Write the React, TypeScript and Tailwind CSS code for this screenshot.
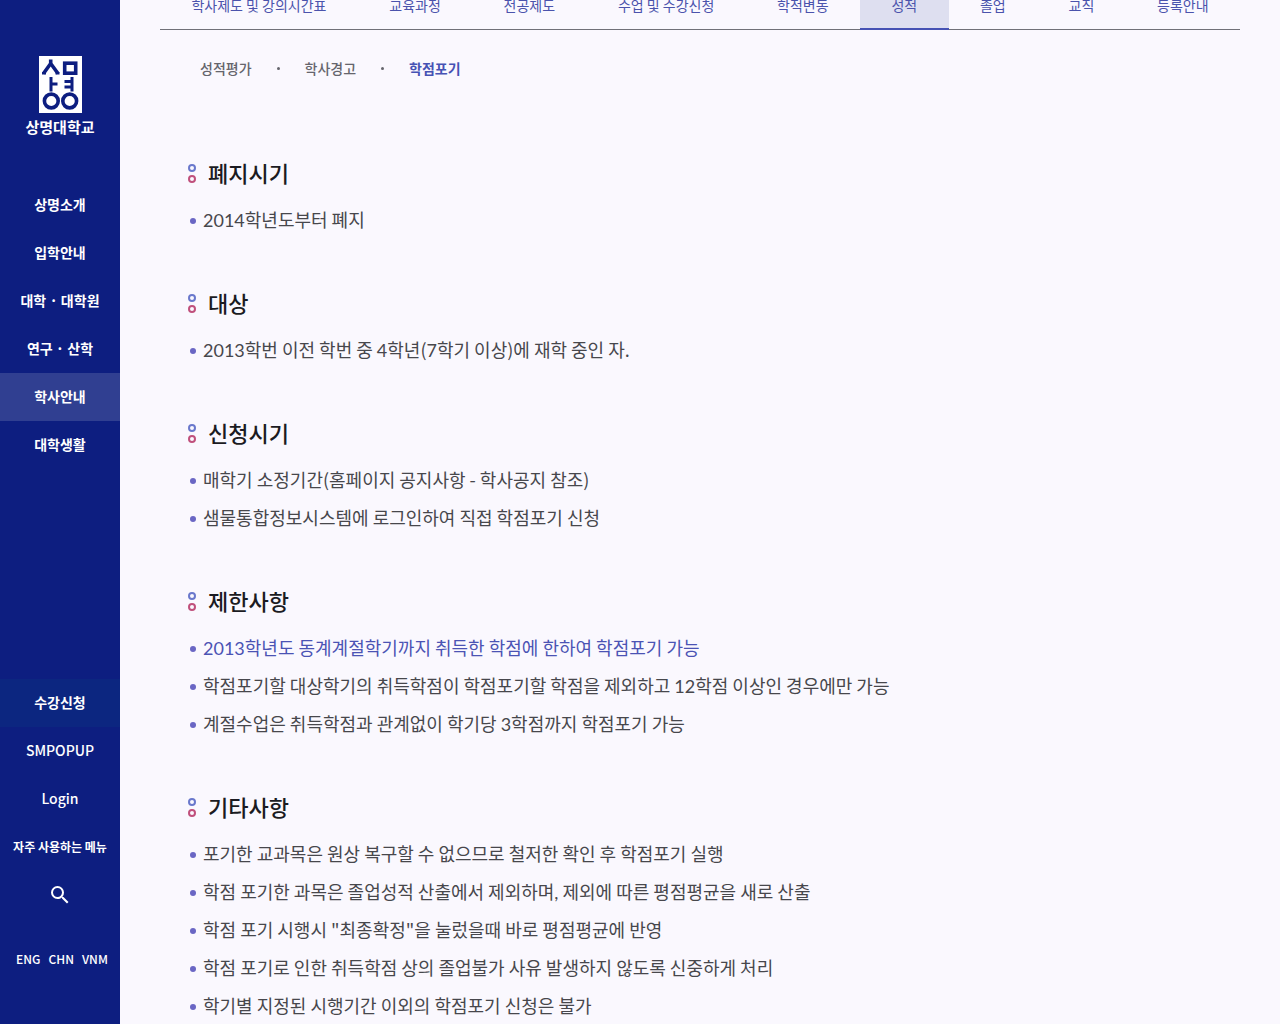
import React from 'react';
import { MdSearch } from 'react-icons/md';

const mainMenu = ['상명소개', '입학안내', '대학 · 대학원', '연구 · 산학', '학사안내', '대학생활'];

const tabs = ['학사제도 및 강의시간표', '교육과정', '전공제도', '수업 및 수강신청', '학적변동', '성적', '졸업', '교직', '등록안내'];

const subTabs = ['성적평가', '학사경고', '학점포기'];

const sections: { title: string; items: { text: string; point?: boolean }[] }[] = [
  { title: '폐지시기', items: [{ text: '2014학년도부터 폐지' }] },
  { title: '대상', items: [{ text: '2013학번 이전 학번 중 4학년(7학기 이상)에 재학 중인 자.' }] },
  {
    title: '신청시기',
    items: [
      { text: '매학기 소정기간(홈페이지 공지사항 - 학사공지 참조)' },
      { text: '샘물통합정보시스템에 로그인하여 직접 학점포기 신청' },
    ],
  },
  {
    title: '제한사항',
    items: [
      { text: '2013학년도 동계계절학기까지 취득한 학점에 한하여 학점포기 가능', point: true },
      { text: '학점포기할 대상학기의 취득학점이 학점포기할 학점을 제외하고 12학점 이상인 경우에만 가능' },
      { text: '계절수업은 취득학점과 관계없이 학기당 3학점까지 학점포기 가능' },
    ],
  },
  {
    title: '기타사항',
    items: [
      { text: '포기한 교과목은 원상 복구할 수 없으므로 철저한 확인 후 학점포기 실행' },
      { text: '학점 포기한 과목은 졸업성적 산출에서 제외하며, 제외에 따른 평점평균을 새로 산출' },
      { text: '학점 포기 시행시 "최종확정"을 눌렀을때 바로 평점평균에 반영' },
      { text: '학점 포기로 인한 취득학점 상의 졸업불가 사유 발생하지 않도록 신중하게 처리' },
      { text: '학기별 지정된 시행기간 이외의 학점포기 신청은 불가' },
    ],
  },
];

function Logo() {
  return (
    <a href="#" className="flex flex-col items-center">
      <svg width="43" height="57" viewBox="0 0 43 57" aria-hidden="true">
        <rect width="43" height="57" fill="#fff" />
        <g fill="none" stroke="#0d1e80" strokeWidth="3.6">
          <path d="M11.700 3.500v4L4.500 17.500M11.700 7.500L19 17.500" />
          <path d="M3 17.300h4M16.500 17.300h4" strokeWidth="2.400" />
          <rect x="25.700" y="7.200" width="11" height="10" />
          <path d="M12 21v14.500M12 28h6.500M33 21v14.500M25.500 25.500h7.500M25.500 31h7.500" strokeWidth="3" />
          <circle cx="12.300" cy="45" r="6.900" />
          <circle cx="30.700" cy="45" r="6.900" />
        </g>
      </svg>
      <span className="mt-1 text-[15px] leading-5 font-bold">상명대학교</span>
    </a>
  );
}

function Sidebar() {
  return (
    <aside className="sticky top-0 flex h-screen w-[120px] shrink-0 flex-col bg-[#0d1e80] pt-14 pb-[41px] text-center text-sm font-bold text-white">
      <Logo />
      <nav className="mt-11">
        {mainMenu.map((m) => (
          <a key={m} href="#" className={`block h-12 leading-[46px] ${m === '학사안내' ? 'bg-[#303f91]' : ''}`}>
            {m}
          </a>
        ))}
      </nav>
      <div className="mt-auto">
        <a href="#" className="block h-12 bg-[#0c2680] leading-[46px]">수강신청</a>
        <a href="#" className="block h-12 leading-[46px] font-medium">SMPOPUP</a>
        <a href="#" className="block h-12 leading-[46px] font-medium">Login</a>
        <button className="block h-12 w-full text-xs leading-[48px] font-bold">자주 사용하는 메뉴</button>
        <button aria-label="검색" className="flex h-12 w-full items-center justify-center">
          <MdSearch size={24} />
        </button>
      </div>
      <div className="mt-4 flex h-12 justify-center gap-2 pl-1 text-xs leading-[48px] font-medium">
        <a href="#">ENG</a>
        <a href="#">CHN</a>
        <a href="#">VNM</a>
      </div>
    </aside>
  );
}

// digits and commas are set in Lato, everything else in Noto Sans
function ItemText({ text }: { text: string }) {
  return text.split(/([\d,]+)/).map((part, i) =>
    i % 2 ? <span key={i} className="font-['Lato',sans-serif]">{part}</span> : part
  );
}

export default function App() {
  return (
    <div className="flex min-h-screen bg-[#faf8fe] font-['Noto_Sans_CJK_KR',sans-serif]">
      <Sidebar />
      <main className="min-w-0 flex-1 px-10">
        <nav className="-mt-[18px] flex border-b border-[#707078] text-sm text-[#4b53ac]">
          {tabs.map((t) => (
            <a
              key={t}
              href="#"
              className={`-mb-px h-12 flex-auto text-center leading-[47px] whitespace-nowrap ${
                t === '성적' ? 'border-b-2 border-[#4652b4] bg-[#dedff0]' : ''
              }`}
            >
              {t}
            </a>
          ))}
        </nav>

        <nav className="mt-[26px] flex items-center gap-[25px] px-10 text-sm leading-6 font-medium text-[#65656c]">
          {subTabs.map((t, i) => (
            <React.Fragment key={t}>
              {i > 0 && <span className="size-[3px] rounded-full bg-[#65656c]" />}
              <a href="#" className={t === '학점포기' ? 'font-bold text-[#4652b4]' : ''}>
                {t}
              </a>
            </React.Fragment>
          ))}
        </nav>

        <div className="mt-[77px] flex flex-col gap-[52px] px-7">
          {sections.map((s) => (
            <section key={s.title}>
              <h2 className="flex h-8 items-start gap-3 text-[22px] leading-[30px] font-medium text-[#1b1b22]">
                <span className="mt-[7px] flex flex-col gap-[3px]">
                  <span className="size-2 rounded-full border-2 border-[#6a78cc]" />
                  <span className="size-2 rounded-full border-2 border-[#c0507c]" />
                </span>
                {s.title}
              </h2>
              <ul className="mt-4 flex flex-col gap-[10px] pb-[2px] pl-[2px] text-lg leading-7 text-[#47474c]">
                {s.items.map((item) => (
                  <li key={item.text} className="flex h-7 items-start gap-[7px]">
                    <span className="mt-[13px] size-[6px] shrink-0 rounded-full bg-[#6a66c4]" />
                    <span className={item.point ? 'text-[#4b53b4]' : ''}>
                      <ItemText text={item.text} />
                    </span>
                  </li>
                ))}
              </ul>
            </section>
          ))}
        </div>
      </main>
    </div>
  );
}
